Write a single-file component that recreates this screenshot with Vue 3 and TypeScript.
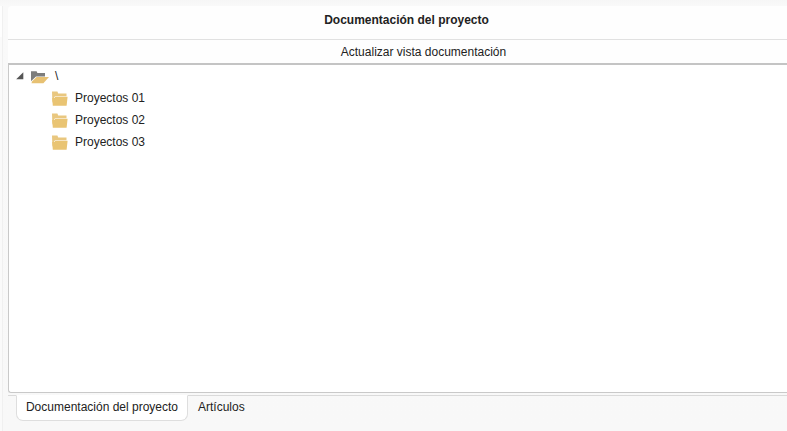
<script setup lang="ts">
import { ref } from 'vue'

const folders = ref<string[]>(['Proyectos 01', 'Proyectos 02', 'Proyectos 03'])
const tabs = ['Documentación del proyecto', 'Artículos']
const activeTab = ref(0)
const expanded = ref(true)
</script>

<template>
  <div class="workspace">
    <aside class="neighbor"></aside>
    <section class="panel">
      <header class="title">Documentación del proyecto</header>
      <button class="refresh" type="button">Actualizar vista documentación</button>
      <main class="tree">
        <div class="row root" @click="expanded = !expanded">
          <svg class="arrow" viewBox="0 0 8 8"><path d="M7.3 0.3V7.2H0.2Z" fill="#555" /></svg>
          <svg class="open-folder" viewBox="0 0 18 13">
            <path d="M0 10V0.2H5.6L6.4 2H14V5.4H5L0.8 9.6Z" fill="#7d7d7c" />
            <path d="M5.6 6.1H18L12.4 12.2H0.5L1 10.4Z" fill="#e7c173" />
          </svg>
          <span>\</span>
        </div>
        <template v-if="expanded">
          <div v-for="folder in folders" :key="folder" class="row child">
            <svg class="folder" viewBox="0 0 16 15">
              <path d="M0 0.5H5.4L6.2 2.4H14.5V5.2H3L2.2 6.5L0.4 12Z" fill="#e9c77f" />
              <path d="M3.2 5.7H15.6L14.6 14.8H0.8L0.2 7H2.6Z" fill="#e9c473" />
            </svg>
            <span>{{ folder }}</span>
          </div>
        </template>
      </main>
      <nav class="tabs">
        <button
          v-for="(tab, i) in tabs"
          :key="tab"
          type="button"
          class="tab"
          :class="{ active: i === activeTab }"
          @click="activeTab = i"
        >{{ tab }}</button>
      </nav>
    </section>
  </div>
</template>

<style>
body {
  background: #f8f8f8;
  overflow: hidden;
}
</style>

<style scoped>
.workspace {
  display: flex;
  box-sizing: border-box;
  height: 431px;
  padding-top: 6px;
  gap: 5px;
  background: linear-gradient(#f6f6f6, #f9f9f9 6px, #f8f8f8);
  color: #222;
  font: 12px/22px "Liberation Sans", Arial, sans-serif;
}
.neighbor {
  box-sizing: border-box;
  width: 3px;
  background: linear-gradient(#fefefe 31px, #fafafa 31px);
  border-right: 1px solid #f0f0f0;
}
.panel {
  display: flex;
  flex: 1;
  flex-direction: column;
  min-width: 0;
}
button {
  padding: 0;
  border: 0;
  background: none;
  color: inherit;
  font: inherit;
  white-space: nowrap;
}
.title {
  box-sizing: border-box;
  height: 34px;
  padding: 3px 0 0 18px;
  border-bottom: 1px solid #e1e1e1;
  border-top-left-radius: 4px;
  background: #fefefe;
  text-align: center;
  font-weight: bold;
}
.refresh {
  height: 23px;
  padding: 1px 0 0 52px;
  background: #fefefe;
}
.tree {
  box-sizing: border-box;
  height: 330px;
  border: 1px solid #c9c9c9;
  border-top: 2px solid #c4c4c4;
  border-right: 0;
  border-bottom-left-radius: 3px;
  background: #fff;
}
.row {
  display: flex;
  align-items: center;
  height: 22px;
}
.root {
  padding-left: 7px;
}
.child {
  padding-left: 43px;
}
.arrow {
  width: 8px;
  height: 8px;
  margin-right: 7px;
}
.open-folder {
  width: 18px;
  height: 13px;
  margin: 3px 6px 0 0;
}
.folder {
  width: 16px;
  height: 15px;
  margin: 1px 7px 0 0;
}
.tabs {
  display: flex;
  height: 35px;
  margin-top: 2px;
  border-top: 1px solid #dadada;
}
.tab {
  box-sizing: border-box;
  height: 24px;
  padding: 0 10px 2px;
}
.tab.active {
  width: 172px;
  height: 26px;
  margin: -1px 0 0 8px;
  padding: 0 0 2px;
  border: 1px solid #dedede;
  border-top-color: #fff;
  border-radius: 0 0 7px 7px;
  background: #fff;
}
</style>
